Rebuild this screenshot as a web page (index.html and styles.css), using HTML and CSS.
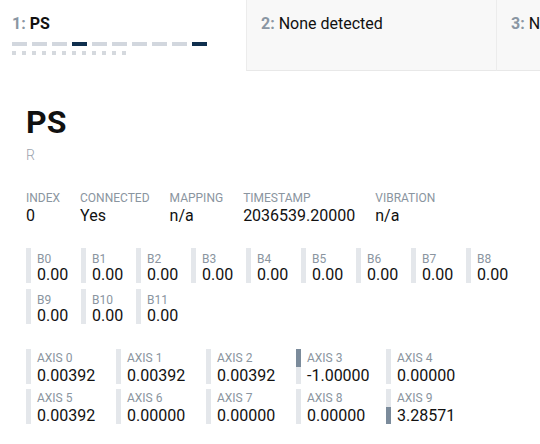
FILE: index.html
```html
<!DOCTYPE html>
<html lang="en">
  <head>
    <meta charset="UTF-8" />
    <meta name="viewport" content="width=device-width, initial-scale=1.0" />
    <title>Gamepad Tester</title>
    <link rel="stylesheet" href="styles.css">
  </head>
  <body>
    <!-- One tab per gamepad slot -->
    <div class="tabs">
      <div class="tab active">
        <div class="tab-title"><span class="tab-num">1:</span> PS</div>
        <div class="pad-axes">
          <span></span><span></span><span></span><span class="on"></span><span></span>
          <span></span><span></span><span></span><span></span><span class="on"></span>
        </div>
        <div class="pad-buttons">
          <span></span><span></span><span></span><span></span><span></span><span></span>
          <span></span><span></span><span></span><span></span><span></span><span></span>
        </div>
      </div>
      <div class="tab">
        <div class="tab-title"><span class="tab-num">2:</span> None detected</div>
      </div>
      <div class="tab">
        <div class="tab-title"><span class="tab-num">3:</span> None detected</div>
      </div>
    </div>

    <div class="device">
      <h1 class="device-name">PS</h1>
      <div class="device-id">R</div>

      <div class="info">
        <div><div class="info-label">Index</div><div class="info-value">0</div></div>
        <div><div class="info-label">Connected</div><div class="info-value">Yes</div></div>
        <div><div class="info-label">Mapping</div><div class="info-value">n/a</div></div>
        <div><div class="info-label">Timestamp</div><div class="info-value">2036539.20000</div></div>
        <div><div class="info-label">Vibration</div><div class="info-value">n/a</div></div>
      </div>

      <!-- Buttons: bar fills up from the bottom with the pressed value -->
      <div class="buttons">
        <div class="meter"><div class="meter-bar"><div class="meter-fill" style="bottom:0;height:0%"></div></div><div class="meter-text"><div class="meter-label">B0</div><div class="meter-value">0.00</div></div></div>
        <div class="meter"><div class="meter-bar"><div class="meter-fill" style="bottom:0;height:0%"></div></div><div class="meter-text"><div class="meter-label">B1</div><div class="meter-value">0.00</div></div></div>
        <div class="meter"><div class="meter-bar"><div class="meter-fill" style="bottom:0;height:0%"></div></div><div class="meter-text"><div class="meter-label">B2</div><div class="meter-value">0.00</div></div></div>
        <div class="meter"><div class="meter-bar"><div class="meter-fill" style="bottom:0;height:0%"></div></div><div class="meter-text"><div class="meter-label">B3</div><div class="meter-value">0.00</div></div></div>
        <div class="meter"><div class="meter-bar"><div class="meter-fill" style="bottom:0;height:0%"></div></div><div class="meter-text"><div class="meter-label">B4</div><div class="meter-value">0.00</div></div></div>
        <div class="meter"><div class="meter-bar"><div class="meter-fill" style="bottom:0;height:0%"></div></div><div class="meter-text"><div class="meter-label">B5</div><div class="meter-value">0.00</div></div></div>
        <div class="meter"><div class="meter-bar"><div class="meter-fill" style="bottom:0;height:0%"></div></div><div class="meter-text"><div class="meter-label">B6</div><div class="meter-value">0.00</div></div></div>
        <div class="meter"><div class="meter-bar"><div class="meter-fill" style="bottom:0;height:0%"></div></div><div class="meter-text"><div class="meter-label">B7</div><div class="meter-value">0.00</div></div></div>
        <div class="meter"><div class="meter-bar"><div class="meter-fill" style="bottom:0;height:0%"></div></div><div class="meter-text"><div class="meter-label">B8</div><div class="meter-value">0.00</div></div></div>
        <div class="meter"><div class="meter-bar"><div class="meter-fill" style="bottom:0;height:0%"></div></div><div class="meter-text"><div class="meter-label">B9</div><div class="meter-value">0.00</div></div></div>
        <div class="meter"><div class="meter-bar"><div class="meter-fill" style="bottom:0;height:0%"></div></div><div class="meter-text"><div class="meter-label">B10</div><div class="meter-value">0.00</div></div></div>
        <div class="meter"><div class="meter-bar"><div class="meter-fill" style="bottom:0;height:0%"></div></div><div class="meter-text"><div class="meter-label">B11</div><div class="meter-value">0.00</div></div></div>
      </div>

      <!-- Axes: bar fills from the middle, up for negative, down for positive -->
      <div class="axes">
        <div class="meter"><div class="meter-bar"><div class="meter-fill" style="top:50%;height:0.2%"></div></div><div class="meter-text"><div class="meter-label">AXIS 0</div><div class="meter-value">0.00392</div></div></div>
        <div class="meter"><div class="meter-bar"><div class="meter-fill" style="top:50%;height:0.2%"></div></div><div class="meter-text"><div class="meter-label">AXIS 1</div><div class="meter-value">0.00392</div></div></div>
        <div class="meter"><div class="meter-bar"><div class="meter-fill" style="top:50%;height:0.2%"></div></div><div class="meter-text"><div class="meter-label">AXIS 2</div><div class="meter-value">0.00392</div></div></div>
        <div class="meter"><div class="meter-bar"><div class="meter-fill" style="top:0;height:50%"></div></div><div class="meter-text"><div class="meter-label">AXIS 3</div><div class="meter-value">-1.00000</div></div></div>
        <div class="meter"><div class="meter-bar"><div class="meter-fill" style="top:50%;height:0%"></div></div><div class="meter-text"><div class="meter-label">AXIS 4</div><div class="meter-value">0.00000</div></div></div>
        <div class="meter"><div class="meter-bar"><div class="meter-fill" style="top:50%;height:0.2%"></div></div><div class="meter-text"><div class="meter-label">AXIS 5</div><div class="meter-value">0.00392</div></div></div>
        <div class="meter"><div class="meter-bar"><div class="meter-fill" style="top:50%;height:0%"></div></div><div class="meter-text"><div class="meter-label">AXIS 6</div><div class="meter-value">0.00000</div></div></div>
        <div class="meter"><div class="meter-bar"><div class="meter-fill" style="top:50%;height:0%"></div></div><div class="meter-text"><div class="meter-label">AXIS 7</div><div class="meter-value">0.00000</div></div></div>
        <div class="meter"><div class="meter-bar"><div class="meter-fill" style="top:50%;height:0%"></div></div><div class="meter-text"><div class="meter-label">AXIS 8</div><div class="meter-value">0.00000</div></div></div>
        <div class="meter"><div class="meter-bar"><div class="meter-fill" style="top:50%;height:50%"></div></div><div class="meter-text"><div class="meter-label">AXIS 9</div><div class="meter-value">3.28571</div></div></div>
      </div>
    </div>
  </body>
</html>
```

FILE: styles.css
```css
body {
  margin: 0;
  font-family: Roboto, "Liberation Sans", sans-serif;
  color: #111;
  background: #fff;
}
.tabs {
  display: flex;
  overflow: hidden;
}
.tab {
  flex: 0 0 250px;
  box-sizing: border-box;
  height: 71px;
  padding: 14px 14px 0;
  background: #f8f8f8;
  border-left: 1px solid #ececec;
  border-bottom: 1px solid #e8e8e8;
}
.tab.active {
  flex-basis: 246px;
  padding-left: 12px;
  background: #fff;
  border-left: none;
  border-bottom-color: transparent;
}
.tab-title {
  font-size: 16px;
  line-height: 19px;
  white-space: nowrap;
}
.tab.active .tab-title {
  font-weight: 700;
}
.tab-num {
  color: #8a96a3;
  font-weight: 700;
}
.pad-axes {
  display: flex;
  gap: 5px;
  margin-top: 9px;
}
.pad-axes span {
  width: 15px;
  height: 4px;
  background: #d2d7de;
}
.pad-axes span.on {
  background: #0f2f4e;
}
.pad-buttons {
  display: flex;
  gap: 6px;
  margin-top: 5px;
}
.pad-buttons span {
  width: 4px;
  height: 4px;
  background: #d5d9de;
}
.device {
  padding: 32px 16px 0 26px;
}
.device-name {
  margin: 0;
  font-size: 32px;
  font-weight: 700;
  line-height: 38px;
}
.device-id {
  margin-top: 6px;
  font-size: 14px;
  line-height: 17px;
  font-weight: 300;
  color: #9ba4ae;
}
.info {
  display: flex;
  gap: 20px;
  margin-top: 27px;
}
.info-label {
  font-size: 12px;
  line-height: 14px;
  color: #8a95a0;
  text-transform: uppercase;
}
.info-value {
  font-size: 16px;
  line-height: 21px;
}
.buttons {
  display: flex;
  flex-wrap: wrap;
  gap: 6px 5px;
  margin-top: 22px;
}
.axes {
  display: flex;
  flex-wrap: wrap;
  gap: 5px;
  margin-top: 25px;
}
.meter {
  display: flex;
  height: 35px;
}
.buttons .meter {
  width: 50px;
}
.axes .meter {
  width: 85px;
}
.meter-bar {
  position: relative;
  flex: 0 0 5px;
  margin-right: 6px;
  background: #e4e7eb;
}
.meter-fill {
  position: absolute;
  left: 0;
  right: 0;
  background: #7b8b9b;
}
.meter-text {
  padding-top: 4px;
  white-space: nowrap;
}
.axes .meter-text {
  padding-top: 2px;
}
.meter-label {
  font-size: 12px;
  line-height: 14px;
  color: #8a95a0;
}
.meter-value {
  font-size: 16px;
  line-height: 17px;
}
.axes .meter-value {
  line-height: 22px;
}
```
